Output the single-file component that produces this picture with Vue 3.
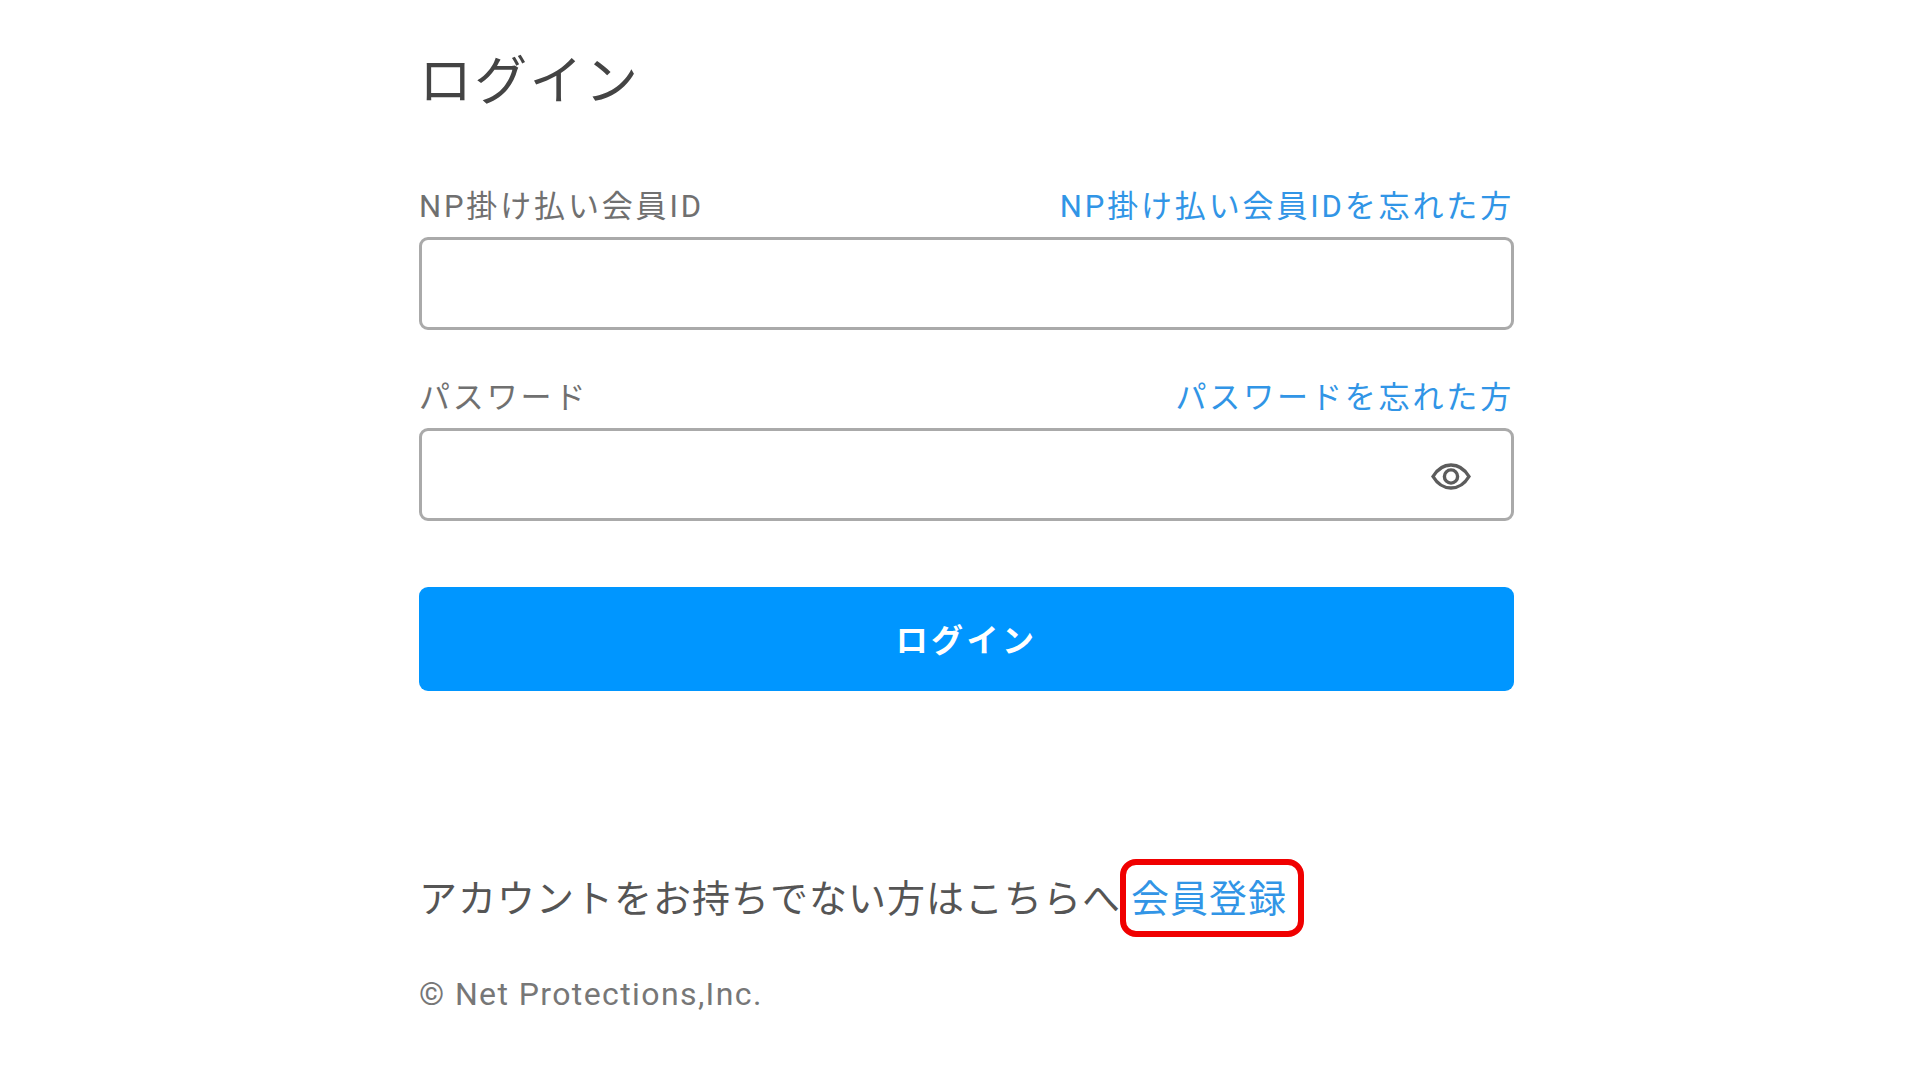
<script setup>
const fields = [
  { label: 'NP掛け払い会員ID', link: 'NP掛け払い会員IDを忘れた方', type: 'text', eye: false },
  { label: 'パスワード', link: 'パスワードを忘れた方', type: 'password', eye: true },
]
</script>

<template>
  <main class="page">
    <h1 class="title">ログイン</h1>
    <form class="form" @submit.prevent>
      <div v-for="f in fields" :key="f.label" class="field">
        <div class="label-row">
          <label class="label">{{ f.label }}</label>
          <a class="link" href="#">{{ f.link }}</a>
        </div>
        <div class="input-wrap">
          <input class="input" :type="f.type" />
          <svg v-if="f.eye" class="eye" viewBox="0 0 40 27" fill="none" stroke="#5c5c5c" stroke-width="3.4">
            <path d="M2 13.5C6.5 6 12.5 2 20 2s13.5 4 18 11.5C33.5 21 27.5 25 20 25S6.5 21 2 13.5Z" />
            <circle cx="20" cy="13.5" r="6.6" />
          </svg>
        </div>
      </div>
      <button class="submit" type="submit">ログイン</button>
    </form>
    <p class="signup">
      <span>アカウントをお持ちでない方はこちらへ</span>
      <a class="signup-link" href="#">会員登録</a>
    </p>
    <p class="copy">© Net Protections,Inc.</p>
  </main>
</template>

<style>
body { margin: 0; background: #fff; }
</style>

<style scoped>
.page {
  box-sizing: border-box;
  width: 1909px;
  height: 1076px;
  padding: 50px 395px 0 419px;
  overflow: hidden;
  font-family: Roboto, "Noto Sans CJK JP", sans-serif;
  color: #555;
}
.title {
  margin: 0 0 71px;
  font-size: 53px;
  line-height: 64px;
  font-weight: 400;
  letter-spacing: 2.3px;
  color: #444;
}
.field { margin-top: 46px; }
.field:first-child { margin-top: 0; }
.label-row {
  display: flex;
  justify-content: space-between;
  align-items: center;
  box-sizing: border-box;
  height: 40px;
  padding-bottom: 3px;
  margin-bottom: 12px;
  font-size: 31px;
  letter-spacing: 2.85px;
}
.label { color: #707070; }
.link { color: #3195e6; text-decoration: none; }
.input-wrap { position: relative; }
.input {
  display: block;
  box-sizing: border-box;
  width: 100%;
  height: 93px;
  border: 3px solid #aaa;
  border-radius: 9px;
  background: #fff;
  outline: none;
}
.eye {
  position: absolute;
  right: 43px;
  top: 35px;
  width: 40px;
  height: 27px;
}
.submit {
  display: block;
  width: 100%;
  height: 104px;
  margin-top: 66px;
  padding: 3px 0 0;
  border: 0;
  border-radius: 9px;
  background: #0096ff;
  color: #fff;
  font: 700 32px/1 Roboto, "Noto Sans CJK JP", sans-serif;
  letter-spacing: 3.4px;
}
.signup {
  display: flex;
  margin: 183px 0 0;
  font-size: 38px;
  line-height: 50px;
  letter-spacing: 1px;
  color: #555;
}
.signup-link {
  position: relative;
  margin-left: 10px;
  color: #3195e6;
  text-decoration: none;
}
.signup-link::after {
  content: "";
  position: absolute;
  left: -11px;
  right: -17px;
  top: -15px;
  bottom: -13px;
  border: 6px solid #f00000;
  border-radius: 16px;
}
.copy {
  margin: 50px 0 0;
  font-size: 32px;
  line-height: 40px;
  letter-spacing: 1.4px;
  color: #777;
}
</style>
